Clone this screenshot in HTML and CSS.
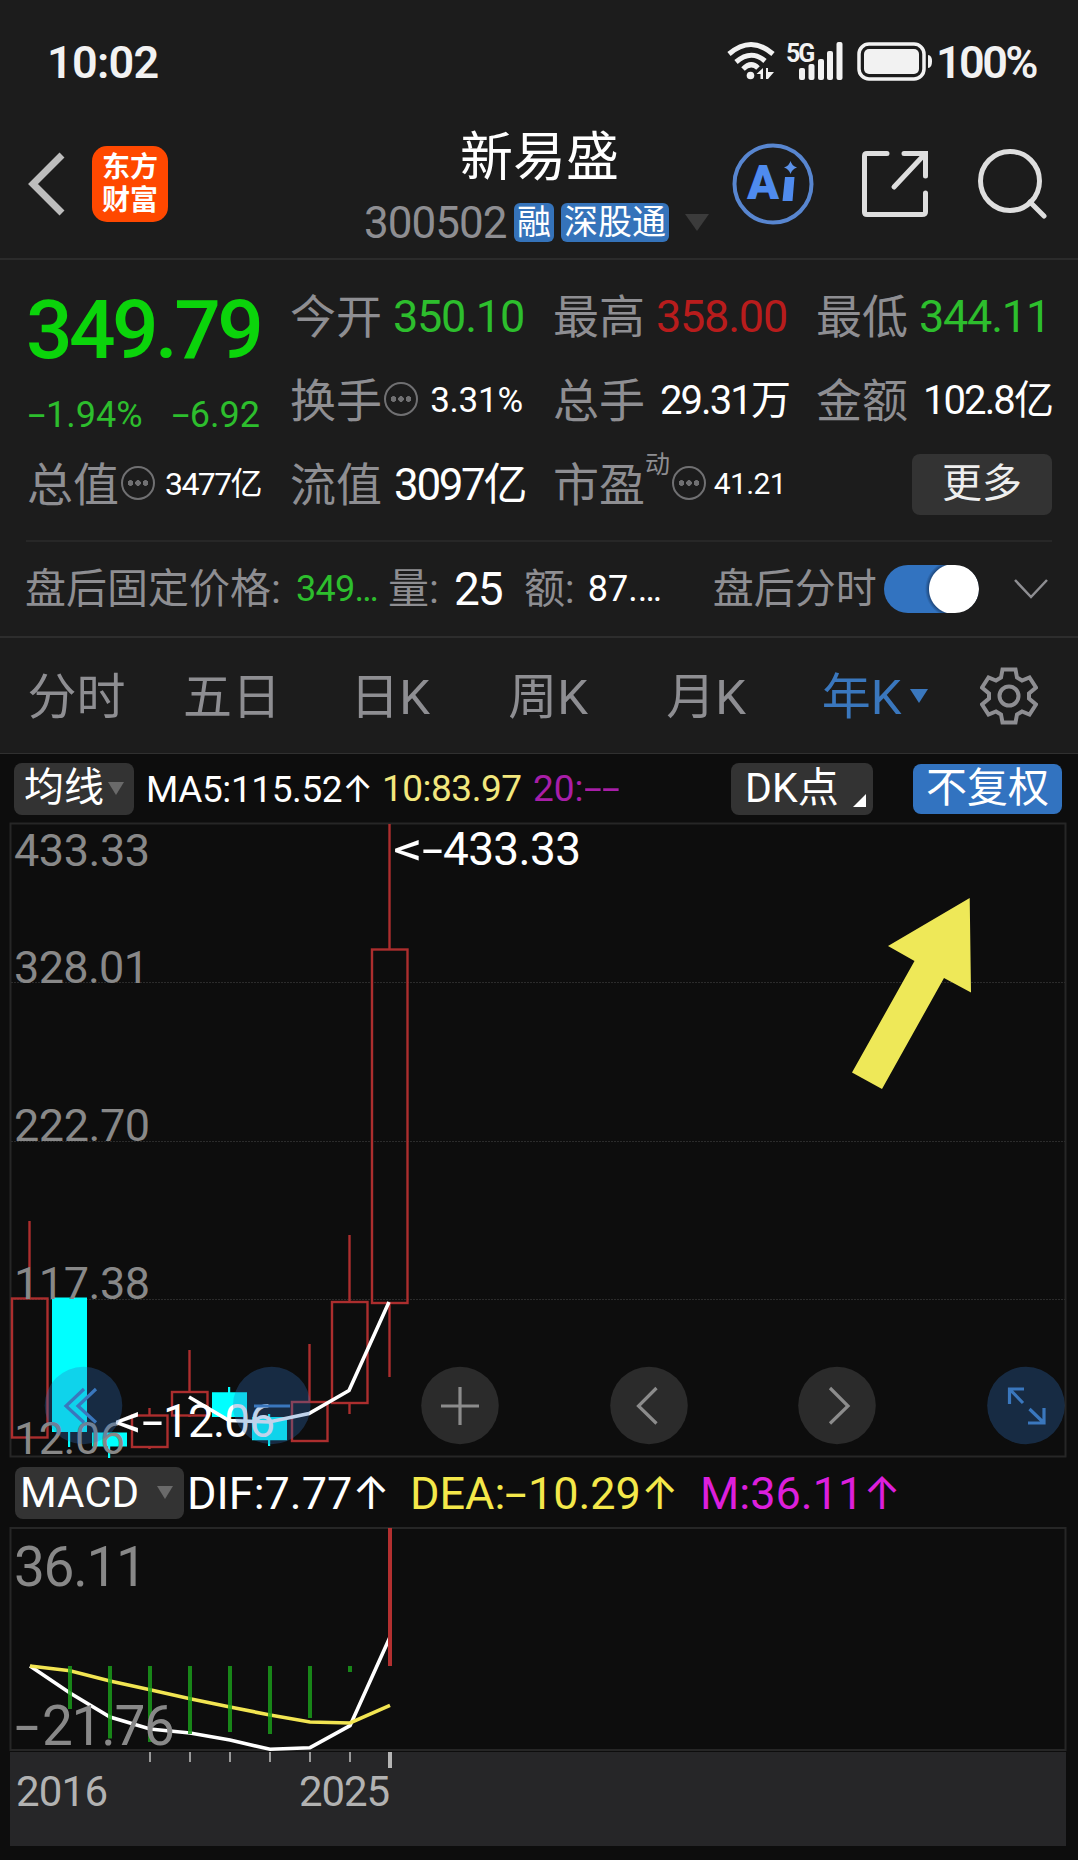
FILE: index.html
```html
<!DOCTYPE html>
<html lang="zh-CN">
<head>
<meta charset="utf-8">
<meta name="viewport" content="width=device-width, initial-scale=1.0"/>
<title>新易盛 300502</title>
<link rel="stylesheet" href="styles.css">
</head>
<body>

<div class="status">
  <span class="time">10:02</span>
  <svg class="wifi" width="48" height="40" viewBox="0 0 48 40" fill="none" stroke="#f2f2f2" stroke-width="5">
    <path d="M2 13 Q24 -6 46 13"/>
    <path d="M9 21 Q24 8 38 20"/>
    <path d="M16 28 Q24 20 31 27"/>
    <circle cx="23.500" cy="34.500" r="3.800" fill="#f2f2f2" stroke="none"/>
    <path d="M29.500 33 L36 27 V38 H33.500 V33 Z M39 27 H41 V31 H47 L41 38 H39 Z" fill="#f2f2f2" stroke="none"/>
  </svg>
  <span class="net">5G</span>
  <svg class="signal" width="44" height="40" viewBox="0 0 44 40" fill="#f2f2f2">
    <rect x="0" y="27" width="6" height="12" rx="2"/>
    <rect x="9.500" y="23" width="6" height="16" rx="2"/>
    <rect x="19" y="18" width="6" height="21" rx="2"/>
    <rect x="28" y="10" width="6" height="29" rx="2"/>
    <rect x="37.500" y="1" width="6" height="38" rx="2"/>
  </svg>
  <svg class="battery" width="78" height="40" viewBox="0 0 78 40">
    <rect x="2" y="3" width="65" height="35" rx="10" fill="none" stroke="#f2f2f2" stroke-width="3.500"/>
    <rect x="7" y="8" width="55" height="25" rx="5" fill="#f2f2f2"/>
    <path d="M71 14 Q75 14 75 20.500 Q75 27 71 27 Z" fill="#f2f2f2"/>
  </svg>
  <span class="percent">100%</span>
</div>

<div class="header">
  <svg class="back" width="40" height="66" viewBox="0 0 40 66" fill="none" stroke="#bdbdbd" stroke-width="7">
    <path d="M35 4 L6 33 L35 62"/>
  </svg>
  <div class="logo">东方<br>财富</div>
  <div class="stock">
    <div class="name">新易盛</div>
    <div class="code">
      <span class="num">300502</span>
      <span class="tag">融</span>
      <span class="tag">深股通</span>
      <svg class="drop" width="24" height="17" viewBox="0 0 24 17"><path d="M0 0 H24 L12 17 Z" fill="#3b3b3b"/></svg>
    </div>
  </div>
  <svg class="ai" width="82" height="84" viewBox="0 0 82 84">
    <circle cx="41" cy="42" r="38.500" fill="none" stroke="#5886d0" stroke-width="4"/>
    <text x="15" y="57" class="ai-text" textLength="32" lengthAdjust="spacingAndGlyphs">A</text>
    <path d="M53 35 H62.500 L60.500 59 H50.500 Z" fill="#4f8bee"/>
    <path d="M58.500 19 Q60 24 65 25.500 Q60 27 58.500 32 Q57 27 52 25.500 Q57 24 58.500 19 Z" fill="#5c92ea"/>
  </svg>
  <svg class="share" width="68" height="68" viewBox="0 0 68 68" fill="none" stroke="#dedede" stroke-width="5" stroke-linecap="round">
    <path d="M26 3.500 H6 Q3.500 3.500 3.500 6 V62 Q3.500 64.500 6 64.500 H61 Q64.500 64.500 64.500 62 V43"/>
    <path d="M43 3.500 H64.500 V26"/>
    <path d="M33 37 L63 5"/>
  </svg>
  <svg class="search" width="70" height="72" viewBox="0 0 70 72" fill="none" stroke="#dedede" stroke-width="5">
    <circle cx="33" cy="33" r="29.500"/>
    <path d="M53 54 L67 68" stroke-linecap="round"/>
  </svg>
</div>

<div class="quote">
  <div class="price-box">
    <div class="price">349.79</div>
    <div class="change"><span><em>-</em>1.94%</span><span><em>-</em>6.92</span></div>
  </div>
  <div class="cell"><label>今开</label><span class="v45 green">350.10</span></div>
  <div class="cell"><label>最高</label><span class="v45 red">358.00</span></div>
  <div class="cell"><label>最低</label><span class="v45 green low">344.11</span></div>
  <div class="cell"><label>换手</label><i class="dots"></i><span class="v35">3.31%</span></div>
  <div class="cell"><label>总手</label><span class="v40">29.31万</span></div>
  <div class="cell"><label>金额</label><span class="v40">102.8亿</span></div>
  <div class="cell"><label>总值</label><i class="dots"></i><span class="v32">3477亿</span></div>
  <div class="cell"><label>流值</label><span class="v44">3097亿</span></div>
  <div class="cell"><label>市盈</label><sup>动</sup><i class="dots pe"></i><span class="v30">41.21</span></div>
  <div class="cell"><button class="more">更多</button></div>
</div>

<div class="after">
  <span class="lbl">盘后固定价格:</span>
  <span class="a-price">349…</span>
  <span class="lbl">量:</span>
  <span class="a-vol">25</span>
  <span class="lbl">额:</span>
  <span class="a-amt">87.…</span>
  <span class="lbl a-min">盘后分时</span>
  <span class="toggle"></span>
  <svg class="chev" width="34" height="22" viewBox="0 0 34 22" fill="none" stroke="#8e8e92" stroke-width="2.500"><path d="M1 2 L17 19 L33 2"/></svg>
</div>

<div class="tabs">
  <span class="tab first">分时</span>
  <span class="tab">五日</span>
  <span class="tab">日K</span>
  <span class="tab">周K</span>
  <span class="tab">月K</span>
  <span class="tab active">年K<svg width="18" height="14" viewBox="0 0 18 14"><path d="M0 0 H18 L9 14 Z" fill="#3a77bd"/></svg></span>
  <svg class="gear" width="58" height="58" viewBox="-29 -29 58 58" fill="none" stroke="#8e8e92" stroke-width="4">
    <path d="M-6.500 -26.500 H6.500 L8 -18.500 L13 -15.500 L20.500 -18.500 L27 -8.500 L20 -2.500 V2.500 L27 8.500 L20.500 18.500 L13 15.500 L8 18.500 L6.500 26.500 H-6.500 L-8 18.500 L-13 15.500 L-20.500 18.500 L-27 8.500 L-20 2.500 V-2.500 L-27 -8.500 L-20.500 -18.500 L-13 -15.500 L-8 -18.500 Z"/>
    <circle r="9.500"/>
  </svg>
</div>

<div class="ma-row">
  <button class="pick">均线<svg width="16" height="13" viewBox="0 0 16 13"><path d="M0 0 H16 L8 13 Z" fill="#6a6a6a"/></svg></button>
  <span class="ma5">MA5:115.52<b>↑</b></span>
  <span class="ma10">10:83.97</span>
  <span class="ma20">20:<em>-</em><em>-</em></span>
  <button class="dk">DK点<svg width="13" height="13" viewBox="0 0 13 13"><path d="M13 0 V13 H0 Z" fill="#fff"/></svg></button>
  <button class="fq">不复权</button>
</div>

<!-- yearly candles, 40px per year -->
<svg class="chart" width="1078" height="640" viewBox="0 820 1078 640">
  <rect x="10.500" y="823.500" width="1055" height="633" class="frame"/>
  <path class="grid" d="M11 982.500 H1065 M11 1141.500 H1065 M11 1299.500 H1065"/>
  <g class="up">
    <path d="M29.500 1221 V1298 M149.500 1408 V1415 M149.500 1447 V1449 M189.500 1350 V1392 M189.500 1415 V1417 M309.500 1344 V1402 M349.500 1235 V1302 M349.500 1403 V1414 M389.500 824 V950 M389.500 1303 V1377"/>
    <rect x="12" y="1298.500" width="35.500" height="139"/>
    <rect x="132" y="1415.500" width="35.500" height="31.500"/>
    <rect x="172" y="1392" width="35.500" height="23.500"/>
    <rect x="292" y="1402" width="35.500" height="39"/>
    <rect x="332" y="1302" width="35.500" height="101"/>
    <rect x="372" y="949.500" width="35.500" height="353.500"/>
  </g>
  <g class="down">
    <path d="M52 1297.500 h35 V1432 h-35 Z M92 1432.500 h35 v14 h-35 Z M212 1392.300 h35 V1417 h-35 Z M252 1417 h35 v23.300 h-35 Z"/>
    <path d="M68 1432 h2.200 v15 h-2.200 Z M108 1446 h2.200 v12 h-2.200 Z M228 1387 h2.200 v6 h-2.200 Z M268 1414 h2.200 v4 h-2.200 Z M268 1440 h2.200 v6 h-2.200 Z"/>
  </g>
  <polyline class="line white" points="189,1397 229,1420.500 269,1422 309,1413.500 349,1390.500 389,1302"/>
  <g class="scale">
    <text x="14" y="866" textLength="136">433.33</text>
    <text x="14" y="982.500" textLength="135">328.01</text>
    <text x="14" y="1141" textLength="136">222.70</text>
    <text x="14" y="1299" textLength="136">117.38</text>
    <text x="14" y="1453.500" textLength="111">12.06</text>
  </g>
  <g class="mark">
    <text x="393" y="864.500" textLength="30" lengthAdjust="spacingAndGlyphs">&lt;</text>
    <text x="422" y="864.500" textLength="21" lengthAdjust="spacingAndGlyphs">-</text>
    <text x="443" y="864.500" textLength="138">433.33</text>
    <text x="114" y="1437" textLength="28" lengthAdjust="spacingAndGlyphs">&lt;</text>
    <text x="142" y="1437" textLength="21" lengthAdjust="spacingAndGlyphs">-</text>
    <text x="163" y="1437" textLength="112">12.06</text>
  </g>
  <g class="round">
    <circle cx="83.500" cy="1405.500" r="38.800" class="blue"/>
    <circle cx="271.700" cy="1405.500" r="38.800" class="blue"/>
    <circle cx="460" cy="1405.500" r="38.800"/>
    <circle cx="649" cy="1405.500" r="38.800"/>
    <circle cx="837" cy="1405.500" r="38.800"/>
    <circle cx="1026" cy="1405.500" r="38.800" class="blue"/>
  </g>
  <path class="ico-blue" d="M84 1389 L66 1406 L84 1422.500 M96 1389 L78 1406 L96 1422.500 M254 1406 H290"/>
  <path class="ico-blue" d="M1024 1389 H1009.500 V1404 M1009.500 1389 L1023 1403 M1044 1408 V1423 H1028 M1029.500 1409 L1044 1423"/>
  <path class="ico-gray" d="M441 1406 H479 M460 1387 V1425 M656.500 1388 L638.500 1406 L656.500 1423.500 M830 1388 L848 1406 L830 1423.500"/>
  <path d="M969.700 898 L971 992.500 L944 978 L882 1089 L852 1072.500 L914.500 961 L888 946 Z" fill="#eee858"/>
</svg>

<div class="macd-row">
  <button class="pick">MACD<svg width="16" height="13" viewBox="0 0 16 13"><path d="M0 0 H16 L8 13 Z" fill="#6a6a6a"/></svg></button>
  <span class="dif">DIF:7.77<b>↑</b></span>
  <span class="dea">DEA:<em>-</em>10.29<b>↑</b></span>
  <span class="m">M:36.11<b>↑</b></span>
</div>

<svg class="macd" width="1078" height="336" viewBox="0 1524 1078 336">
  <rect x="10" y="1752" width="1056" height="94" fill="#262628"/>
  <rect x="10.500" y="1528" width="1055" height="222" class="frame"/>
  <polyline class="line white" points="30,1666 70,1693 110,1717 150,1729 190,1733 230,1740 270,1749.300 310,1747.700 350,1725.700 390,1637"/>
  <polyline class="line yellow" points="30,1666 70,1670.700 110,1681 150,1689.700 190,1698.700 230,1707 270,1715 310,1722 350,1723 390,1705.300"/>
  <path class="bars" d="M70 1666 V1709 M110 1666 V1738.500 M150 1666 V1742 M190 1666 V1734 M230 1666 V1732 M270 1666 V1734 M310 1666 V1718 M350 1666 V1672"/>
  <path d="M390 1528 V1666" stroke="#b33030" stroke-width="4"/>
  <g class="scale big">
    <text x="14" y="1585.500" textLength="133">36.11</text>
    <text x="15" y="1745" textLength="24" lengthAdjust="spacingAndGlyphs">-</text>
    <text x="42" y="1745" textLength="133">21.76</text>
  </g>
  <path d="M150 1752 V1762 M190 1752 V1762 M230 1752 V1762 M270 1752 V1762 M310 1752 V1762 M350 1752 V1762" stroke="#9a9a9a" stroke-width="2"/>
  <path d="M390 1752 V1768" stroke="#b5b5b5" stroke-width="4"/>
  <g class="year">
    <text x="16" y="1805.500" textLength="92">2016</text>
    <text x="299" y="1805.500" textLength="91">2025</text>
  </g>
</svg>

</body>
</html>
```
FILE: styles.css
```css
* {
  box-sizing: border-box;
}
body {
  margin: 0;
  width: 1078px;
  height: 1860px;
  overflow: hidden;
  background: #0d0d0d;
  color: #fff;
  font-family: Roboto, "Noto Sans CJK SC", sans-serif;
  line-height: 1;
}
svg {
  display: block;
  flex: none;
}
span, label {
  white-space: nowrap;
}
button {
  border: none;
  padding: 0;
  color: #fff;
  background: #333;
  font-family: inherit;
  line-height: 1;
  border-radius: 8px;
  flex: none;
}
/* wide minus sign */
em {
  display: inline-block;
  width: 0.5em;
  font-style: normal;
  letter-spacing: 0;
  transform: scaleX(1.75);
  transform-origin: 0 50%;
}

/* status bar */
.status {
  display: flex;
  height: 124px;
  padding: 41px 0 0 47px;
  background: #1c1c1c;
  color: #f2f2f2;
}
.time {
  width: 680px;
  font-size: 45px;
  line-height: 43px;
  font-weight: 600;
  letter-spacing: -0.7px;
}
.net {
  width: 23px;
  margin-left: 11px;
  font-size: 25px;
  font-weight: 700;
  letter-spacing: -2px;
}
.signal {
  margin-left: -10px;
}
.battery {
  margin-left: 14px;
}
.percent {
  margin-left: 1px;
  font-size: 45px;
  line-height: 43px;
  font-weight: 600;
  letter-spacing: -2.6px;
}

/* title bar */
.header {
  display: flex;
  height: 136px;
  background: #1c1c1c;
  border-bottom: 2px solid #2b2b2b;
}
.back {
  margin: 27px 0 0 27px;
}
.logo {
  width: 76px;
  height: 76px;
  margin: 22px 0 0 25px;
  padding-top: 5px;
  border-radius: 15px;
  background: #ff4800;
  font-size: 28px;
  line-height: 33px;
  font-weight: 700;
  text-align: center;
}
.stock {
  width: 345px;
  margin-left: 196px;
}
.name {
  padding: 8px 0 0 96px;
  font-size: 53px;
  height: 79px;
}
.code {
  display: flex;
  align-items: center;
  height: 39px;
}
.code .num {
  width: 150px;
  font-size: 44px;
  letter-spacing: -1px;
  color: #8e8e92;
}
.tag {
  height: 39px;
  padding: 0 3px;
  margin-right: 7px;
  border-radius: 6px;
  background: #3573ba;
  font-size: 34px;
  line-height: 39px;
}
.drop {
  margin-left: 9px;
}
.ai {
  margin: 18px 0 0 23px;
}
.ai-text {
  font: 900 48px Roboto, sans-serif;
  fill: #4f8bee;
}
.share {
  margin: 26px 0 0 47px;
}
.search {
  margin: 24px 0 0 48px;
}

/* quote numbers */
.quote {
  display: grid;
  grid-template-columns: repeat(4, 232px);
  grid-template-rows: 84px 84px 84px;
  column-gap: 31px;
  height: 280px;
  padding: 14px 0 0 28px;
  background: #1c1c1c;
}
.price-box {
  grid-row: 1 / 3;
}
.price {
  margin-left: -2px;
  padding-top: 15px;
  font-size: 82px;
  font-weight: 500;
  letter-spacing: -3.6px;
  color: #0bd40b;
}
.change {
  display: flex;
  justify-content: space-between;
  margin-top: 26px;
  font-size: 36px;
  color: #2dbe2d;
}
.cell {
  display: flex;
  align-items: center;
}
.cell label {
  padding-top: 2px;
  margin-left: -1px;
  font-size: 46px;
  color: #8e8e92;
}
.cell span {
  margin-left: auto;
}
.cell sup {
  margin: -40px 0 0 0;
  font-size: 25px;
  line-height: 25px;
  color: #8e8e92;
}
.dots {
  width: 34px;
  height: 34px;
  margin: -3px 0 0 2px;
  border: 2px solid #707072;
  border-radius: 50%;
  background: radial-gradient(circle at 7.500px 15px, #707072 2.600px, transparent 3px),
    radial-gradient(circle at 15px 15px, #707072 2.600px, transparent 3px),
    radial-gradient(circle at 22.500px 15px, #707072 2.600px, transparent 3px);
}
.green { color: #2dbe2d; }
.red { color: #b81c1c; }
.v45 { font-size: 45px; letter-spacing: -1.2px; margin-right: -1px; }
.low { padding-right: 0; }
.v35 { font-size: 35px; letter-spacing: -0.2px; }
.v40 { font-size: 40px; letter-spacing: -1.9px; padding-top: 2px; margin-right: -3px; }
.v32 { font-size: 32px; letter-spacing: -1.6px; margin-right: -1px; }
.v44 { font-size: 44px; letter-spacing: -2.4px; margin-right: -2px; padding-top: 1px; }
.v30 { font-size: 30px; letter-spacing: -0.6px; }
.more {
  width: 140px;
  height: 61px;
  margin-left: 95px;
  font-size: 40px;
  color: #eee;
}

/* after-hours */
.after {
  display: flex;
  align-items: center;
  height: 96px;
  padding: 2px 0 0 25px;
  background: linear-gradient(#272727, #272727) 26px 0 / 1026px 2px no-repeat #1c1c1c;
  font-size: 36px;
}
.lbl {
  font-size: 41px;
  color: #8e8e92;
}
.a-price {
  width: 92px;
  margin-left: 15px;
  letter-spacing: -0.7px;
  color: #2dbe2d;
}
.a-vol {
  width: 70px;
  margin-left: 15px;
  font-size: 46px;
  letter-spacing: -2px;
}
.a-amt {
  width: 125px;
  margin-left: 13px;
}
.after .a-min {
  width: 171px;
}
.toggle {
  width: 95px;
  height: 48px;
  border-radius: 24px;
  background: radial-gradient(circle at 70px 24px, #fff 24.5px, rgba(20, 50, 90, .6) 25.5px, transparent 29px) #3273c0;
}
.chev {
  margin-left: 35px;
}

/* period tabs */
.tabs {
  display: flex;
  align-items: center;
  height: 118px;
  background: #1c1c1c;
  border-top: 2px solid #2d2d2d;
  border-bottom: 1px solid #303030;
  font-size: 49px;
  color: #8e8e92;
}
.tab {
  display: flex;
  align-items: center;
  justify-content: center;
  width: 158px;
  padding-top: 3px;
}
.tab.first {
  width: 153px;
}
.tab.active {
  width: 180px;
  color: #3a77bd;
}
.tab svg {
  margin: -3px 0 0 9px;
}
.gear {
  margin-left: 15px;
}

/* indicator bars */
.ma-row,
.macd-row {
  display: flex;
  align-items: center;
}
.ma-row {
  height: 66px;
  padding: 3px 0 0 14px;
  font-size: 37px;
}
.pick {
  display: flex;
  align-items: center;
  justify-content: space-between;
  height: 52px;
}
.ma-row .pick {
  width: 120px;
  padding: 0 10px 1px 10px;
  font-size: 40px;
}
.ma-row b,
.macd-row b {
  display: inline-block;
  font-family: Inter, sans-serif;
  font-weight: 400;
  line-height: 1;
  letter-spacing: 0;
  text-align: center;
}
.ma5 {
  width: 236px;
  margin-left: 12px;
  letter-spacing: -0.4px;
}
.ma10 {
  width: 151px;
  letter-spacing: -0.5px;
  color: #f2e77d;
}
.ma20 {
  width: 198px;
  color: #a81ea8;
}
.dk {
  display: flex;
  align-items: center;
  justify-content: space-between;
  width: 142px;
  height: 52px;
  padding: 0 7px 1px 14px;
  font-size: 41px;
}
.dk svg {
  margin-top: 25px;
}
.fq {
  width: 149px;
  height: 50px;
  margin-left: 40px;
  padding-bottom: 1px;
  background: #3273c0;
  font-size: 41px;
}
.macd-row {
  height: 64px;
  padding: 1px 0 0 15px;
  font-size: 45px;
}
.macd-row .pick {
  width: 169px;
  padding: 0 11px 0 5px;
  font-size: 42px;
}
.dif {
  width: 223px;
  margin-left: 3px;
}
.dea {
  width: 290px;
  color: #f4e84a;
}
.m {
  color: #dc1fdc;
}

/* charts */
.frame {
  fill: none;
  stroke: #262626;
  stroke-width: 2;
}
.grid {
  stroke: #2b2b2b;
  stroke-width: 1;
  stroke-dasharray: 2 1;
}
.up {
  fill: none;
  stroke: #ac2e2e;
  stroke-width: 2.4;
}
.down {
  fill: #00ffff;
}
.line {
  fill: none;
  stroke-width: 3.6;
}
.white { stroke: #fff; }
.yellow { stroke: #f2e552; }
.bars {
  stroke: #1a9a1a;
  stroke-width: 4;
  opacity: .85;
}
.scale text {
  font-size: 45px;
  fill: #888;
}
.big text {
  font-size: 55px;
}
.mark text {
  font-size: 46px;
  fill: #fff;
}
.year text {
  font-size: 42px;
  fill: #b2b2b2;
}
.round circle {
  fill: #2b2b2b;
}
.round .blue {
  fill: rgba(48, 112, 190, .31);
}
.ico-blue,
.ico-gray {
  fill: none;
  stroke: #3a77bd;
  stroke-width: 3.2;
}
.ico-gray {
  stroke: #8c8c8c;
}
```
